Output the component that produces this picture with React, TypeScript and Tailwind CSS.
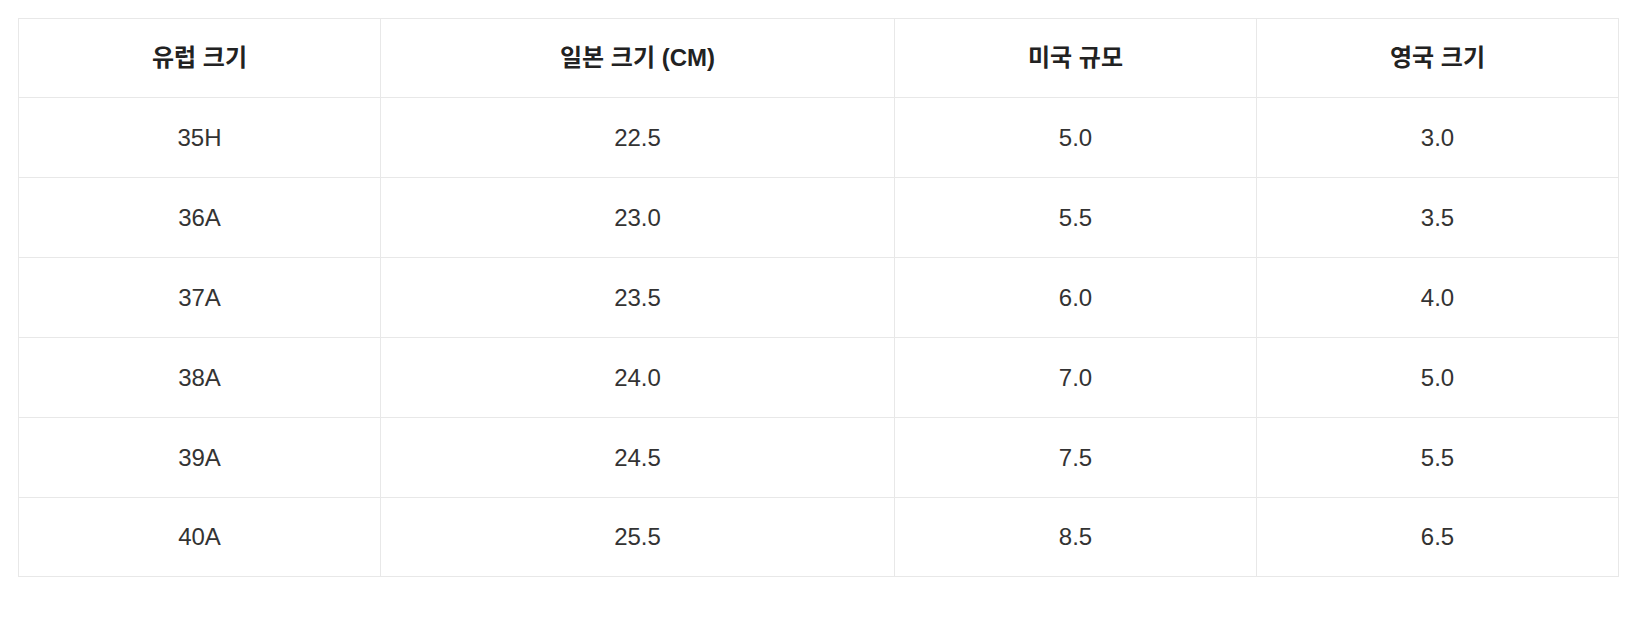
import React from "react";

const rows = [
  ["35H", "22.5", "5.0", "3.0"],
  ["36A", "23.0", "5.5", "3.5"],
  ["37A", "23.5", "6.0", "4.0"],
  ["38A", "24.0", "7.0", "5.0"],
  ["39A", "24.5", "7.5", "5.5"],
  ["40A", "25.5", "8.5", "6.5"],
];

export default function App() {
  return (
    <div className="min-h-[636px] bg-white p-[18px] font-['Liberation_Sans','Noto_Sans_CJK_KR',sans-serif] text-[24px] text-[#222]">
      <table className="w-[1601px] table-fixed border-collapse border border-[#e8e8e8]">
        <colgroup>
          <col className="w-[362px]" />
          <col className="w-[514px]" />
          <col className="w-[362px]" />
          <col className="w-[362px]" />
        </colgroup>
        <thead>
          <tr className="h-[79px]">
            <th className="border border-[#e8e8e8] text-center font-bold">유럽 크기</th>
            <th className="border border-[#e8e8e8] text-center font-bold">일본 크기 (CM)</th>
            <th className="border border-[#e8e8e8] text-center font-bold">미국 규모</th>
            <th className="border border-[#e8e8e8] text-center font-bold">영국 크기</th>
          </tr>
        </thead>
        <tbody>
          {rows.map((r, idx) => (
            <tr key={r[0]} className={idx === rows.length - 1 ? "h-[79px]" : "h-[80px]"}>
              {r.map((c, i) => (
                <td key={i} className="border border-[#e8e8e8] text-center font-normal text-[#333]">
                  {c}
                </td>
              ))}
            </tr>
          ))}
        </tbody>
      </table>
    </div>
  );
}
